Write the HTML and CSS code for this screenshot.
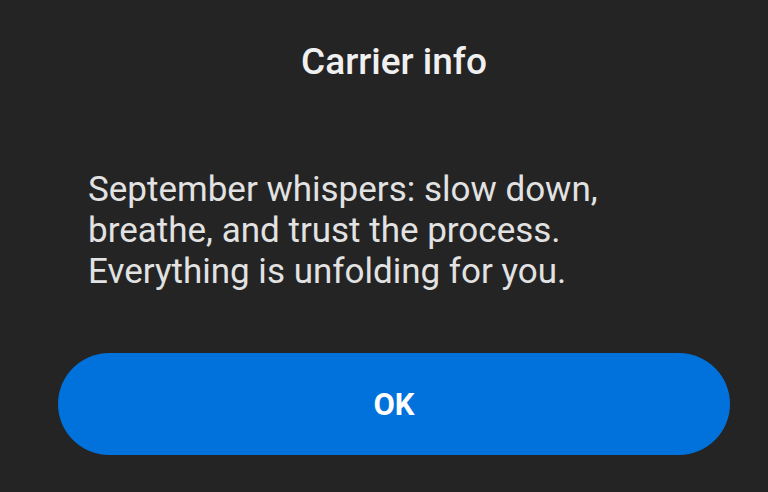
FILE: index.html
```html
<!DOCTYPE html>
<html lang="en">
<head>
  <meta charset="UTF-8">
  <meta name="viewport" content="width=device-width, initial-scale=1.0">
  <link rel="stylesheet" href="styles.css">
  <title>Carrier info</title>
</head>
<body>
  <div class="dialog">
    <h1 class="title">Carrier info</h1>
    <p class="message">September whispers: slow down,<br>breathe, and trust the process.<br>Everything is unfolding for you.</p>
    <button class="ok-button">OK</button>
  </div>
</body>
</html>
```

FILE: styles.css
```css
body {
  margin: 0;
  padding: 0;
  background-color: #242424;
  font-family: Roboto, "Liberation Sans", sans-serif;
  height: 100vh;
  overflow: hidden;
}

.dialog {
  display: flex;
  flex-direction: column;
  padding: 0 38px 0 58px;
}

.title {
  margin: 40px 0 0;
  font-size: 37px;
  font-weight: 500;
  line-height: 44px;
  color: #f0f0f0;
  text-align: center;
}

.message {
  margin: 85px 0 0 30px;
  font-size: 35px;
  line-height: 41px;
  color: #e2e2e2;
}

.ok-button {
  margin-top: 61px;
  height: 102px;
  border: none;
  border-radius: 51px;
  background-color: #0172dc;
  color: #ffffff;
  font-family: Roboto, "Liberation Sans", sans-serif;
  font-size: 31px;
  font-weight: 700;
}
```
